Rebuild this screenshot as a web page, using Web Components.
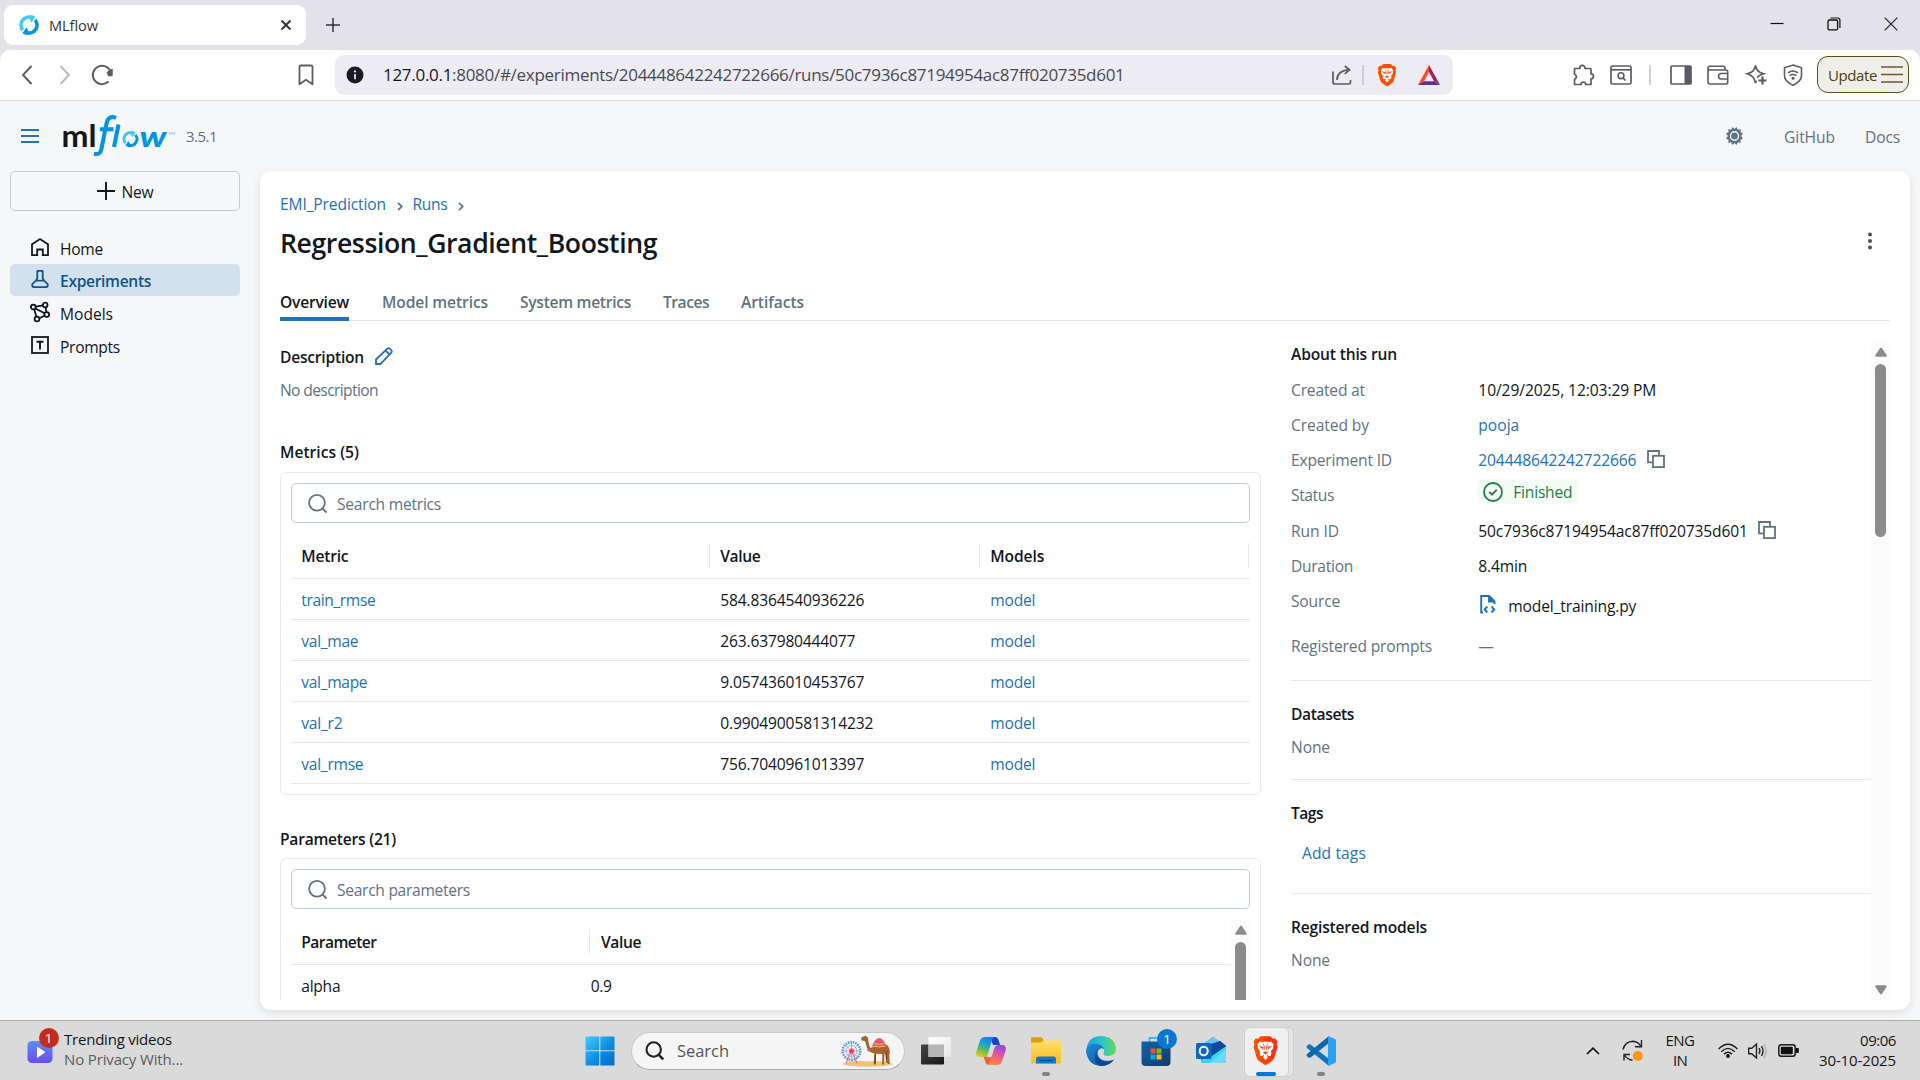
<!DOCTYPE html>
<html lang="en">
<head>
<meta charset="utf-8">
<title>MLflow</title>
<style>
html,body{margin:0;padding:0}
body{width:1920px;height:1080px;overflow:hidden;background:#f5f7f9;font:15.6px/20px "Open Sans","Noto Sans",sans-serif;color:#11171c}
</style>
</head>
<body>
<desktop-screen></desktop-screen>
<script>
const BASE = '<style>*{box-sizing:border-box}:host{box-sizing:border-box}fit-text,ui-icon{flex:none}</style>';
function define(name, html, setup) {
  const t = document.createElement('template');
  t.innerHTML = BASE + html;
  customElements.define(name, class extends HTMLElement {
    constructor() {
      super();
      this.attachShadow({mode: 'open'}).appendChild(t.content.cloneNode(true));
    }
    connectedCallback() { if (setup) setup(this, this.shadowRoot); }
  });
}

/* Icon set: [viewBox, markup]. Strokes use currentColor. */
const LION = '<path fill="#fff" d="M7.2 5.2l2.3.5 2.5-.4 2.5.4 2.3-.5 1.9 2.5-.5 1.4.4 1.2-2.2 3.1.5 1.6-.6 1.7-1.8.2-1.1-.9-.3.9 1.1 1-2.2 2.3-2.2-2.3 1.1-1-.3-.9-1.1.9-1.8-.2-.6-1.7.5-1.6-2.2-3.1.4-1.2-.5-1.4z"/><path d="M7 9l3.400 1-.7 1.300zM17 9l-3.400 1 .7 1.300zM10.200 14.200l1.800-.9 1.800.9-1.800 1.400zM10.300 6.800l.9 3-.3 2.400M13.700 6.800l-.9 3 .3 2.400" fill="#fb4a14" stroke="#fb4a14" stroke-width=".5"/>';
const BRAVE = '<defs><linearGradient id="b" x2="1"><stop stop-color="#ff5500"/><stop offset="1" stop-color="#ff2a10"/></linearGradient></defs><path fill="FILL" d="M7.8 1h8.4l1.9 2 2-.1 1.9 2.4-.8 2 .7 2.3-2.7 9.2-1.5 2L12 24.4l-5.700-3.6-1.5-2L2.100 9.600l.7-2.300-.8-2L3.900 2.900l2 .1z"/>' + LION;
const LOOP = '<path d="M3.900 15.200A8 8 0 0 1 12.500 2.400" stroke="#43c9ed" stroke-width="3.600" fill="none"/><path d="M11.500 0q3 .2 5 2l-4 5.500-2-3.500z" fill="#43c9ed"/><path d="M16.100 4.800A8 8 0 0 1 7.500 17.600" stroke="#0194e2" stroke-width="3.600" fill="none"/><path d="M8.500 20q-3-.2-5-2l4-5.500 2 3.500z" fill="#0194e2"/>';
const ICONS = {
  loop: ['0 0 20 20', LOOP],
  x: ['0 0 12 12', '<path d="M1.500 1.500l9 9m0-9l-9 9" stroke="currentColor" stroke-width="1.900"/>'],
  plus: ['0 0 18 18', '<path d="M9 0v18M0 9h18" stroke="currentColor" stroke-width="1.900"/>'],
  min: ['0 0 14 14', '<path d="M.5 6.500h13" stroke="#111" stroke-width="1.200"/>'],
  restore: ['0 0 14 14', '<rect x="1" y="3" width="9.600" height="9.800" rx="1.200" fill="none" stroke="#111" stroke-width="1.300"/><path d="M3.500 1h7.300q2.100 0 2.100 2.100v8" fill="none" stroke="#111" stroke-width="1.200"/>'],
  close: ['0 0 14 14', '<path d="M.7.700l12.600 12.600m0-12.600L.7 13.300" stroke="#222" stroke-width="1.200"/>'],
  back: ['0 0 12 20', '<path d="M10.500 1L2 10l8.500 9" fill="none" stroke="currentColor" stroke-width="1.900"/>'],
  fwd: ['0 0 12 20', '<path d="M1.500 1L10 10l-8.500 9" fill="none" stroke="currentColor" stroke-width="1.900"/>'],
  reload: ['0 0 22 22', '<path d="M17.500 17.500A9.200 9.200 0 1 1 19.300 7" fill="none" stroke="currentColor" stroke-width="1.900"/><path d="M16 8.500l5.200-3.500v6.500l-3.500.5z" fill="currentColor" stroke="currentColor" stroke-linejoin="round"/>'],
  bookmark: ['0 0 16 22', '<path d="M3 1.500h10q1.500 0 1.500 1.500v17.300L8 15.800l-6.500 4.500V3Q1.500 1.500 3 1.500z" fill="none" stroke="currentColor" stroke-width="1.800" stroke-linejoin="round"/>'],
  info: ['0 0 18 18', '<circle cx="9" cy="9" r="8.500" fill="#1b1a20"/><path d="M9 8v5.200" stroke="#edecf2" stroke-width="1.700"/><circle cx="9" cy="5.400" r="1.100" fill="#edecf2"/>'],
  share: ['0 0 20 20', '<path d="M1 6.500V17q0 2 2 2h14q1.500 0 1.500-1.500V15M5 15q0-9.500 12-10.200M12.800 1l4.800 3.800-4.800 4" fill="none" stroke="currentColor" stroke-width="1.700"/>'],
  brave: ['0 0 24 25', BRAVE.replace('FILL', '#ff4f00')],
  bravebig: ['0 0 24 25', BRAVE.replace('FILL', 'url(#b)')],
  bat: ['0 0 22 20', '<path d="M11 0L0 20l6-3.800L11 7z" fill="#ff4724"/><path d="M11 0v7l5 9.200 6 3.800z" fill="#9e1f63"/><path d="M0 20l6-3.800h10l6 3.800z" fill="#662d91"/>'],
  puzzle: ['0 0 22 22', '<path d="M1.500 4.500h5.300a2.600 2.600 0 1 1 5.100 0h5.100q1 0 1 1v4.300a2.500 2.500 0 1 1 0 5v5.700h-5.200a2.400 2.400 0 0 0-4.800 0H1.500v-5.200a2.600 2.600 0 0 0 0-5z" fill="none" stroke="currentColor" stroke-width="1.700" stroke-linejoin="round"/>'],
  searchtab: ['0 0 22 20', '<rect x="1" y="1" width="20" height="18" rx="1.500" fill="none" stroke="currentColor" stroke-width="1.700"/><path d="M1 4.800h20" stroke="currentColor" stroke-width="1.700"/><circle cx="11" cy="10.700" r="2.900" fill="none" stroke="currentColor" stroke-width="1.600"/><path d="M13 13l2.500 2.500" stroke="currentColor" stroke-width="1.700"/>'],
  panel: ['0 0 22 20', '<rect x="1" y="1" width="20" height="18" rx="1" fill="none" stroke="currentColor" stroke-width="1.700"/><path d="M14.500 1H21v18h-6.500z" fill="currentColor"/>'],
  wallet: ['0 0 22 20', '<path d="M1 3.200V17q0 2 2 2h16q1.700 0 1.700-1.700V6.700Q20.700 5 19 5H3Q1 5 1 3.200T3 1.300h13.500q1.500 0 1.500 1.500V5M20.700 8.500h-6.500q-2.700 0-2.700 2.700t2.700 2.800h6.500" fill="none" stroke="currentColor" stroke-width="1.600"/>'],
  sparkle: ['0 0 22 22', '<path d="M9.500 1.500c1.200 5 2.500 6.500 8.300 8.300-4.300 1.200-5.500 2.200-6.500 4M9.500 1.500C8.300 6.500 7 8 1.200 9.800 7 11.600 8.300 14 9.500 19c.2-1 .5-1.500.8-2.300" fill="none" stroke="currentColor" stroke-width="1.700"/><path d="M16.500 12.500v8M12.500 16.500h8" stroke="currentColor" stroke-width="2.200"/>'],
  vpn: ['0 0 20 22', '<path d="M10 1l8.500 2.800v7.700c0 4-3 7.200-8.500 9.700C4.500 18.700 1.500 15.500 1.500 11.500V3.800z" fill="none" stroke="currentColor" stroke-width="1.600"/><path d="M5 8.800q5-3.600 10 0M6.500 11.600q3.500-2.400 7 0" fill="none" stroke="currentColor" stroke-width="1.500"/><circle cx="10" cy="14.200" r="1.500" fill="currentColor"/>'],
  menu3: ['0 0 22 18', '<path d="M0 2h22M0 9.500h22M0 17h22" stroke="currentColor" stroke-width="1.700"/>'],
  burger: ['0 0 18 14', '<path d="M0 1h18M0 7h18M0 13h18" stroke="currentColor" stroke-width="1.900"/>'],
  gear: ['0 0 18 18', '<path d="M9 2l2-2 1.600 2.700 2.900-.6-.3 3L18 6.400 16 9l2 2.600-2.800 1.300.3 3-2.900-.6L11 18l-2-2-2 2-1.600-2.700-2.900.6.3-3L0 11.600 2 9 0 6.400l2.800-1.300-.3-3 2.900.6L7 0z" fill="currentColor"/><circle cx="9" cy="9" r="4.300" fill="none" stroke="#f5f7f9" stroke-width="1.500"/>'],
  home: ['0 0 18 18', '<path d="M1 6.300L9 1l8 5.300v10.800h-5.200v-5.600H6.200v5.600H1z" fill="none" stroke="currentColor" stroke-width="1.800"/>'],
  flask: ['0 0 18 18', '<path d="M5.800.9h6.400M6.300 1v6.800L5 10.600h8l-1.300-2.800V1M5 10.600l-3.700 3.600q-.6 2.700 1.700 2.900h12q2.300-.2 1.700-2.900L13 10.600" fill="none" stroke="currentColor" stroke-width="1.800"/>'],
  models: ['0 0 20 20', '<g fill="none" stroke="currentColor" stroke-width="1.800"><circle cx="3.300" cy="5" r="2.400"/><circle cx="15.200" cy="3" r="2.300"/><circle cx="16.700" cy="12.600" r="2.400"/><circle cx="7" cy="17" r="2.400"/><path d="M5.700 4.600l7.200-1.300M5.300 6.500l9.300 4.800M15.700 5.300l.6 4.900M4.200 7.400l2.200 7.200M9.300 16.200l5.300-2.500"/></g>'],
  prompts: ['0 0 18 18', '<rect x="1" y="1" width="16" height="16" fill="none" stroke="currentColor" stroke-width="1.800"/><path d="M5.500 5.700h7M9 5v8.500" stroke="currentColor" stroke-width="1.900"/>'],
  chev: ['0 0 6 9', '<path d="M1 .8l3.700 3.700L1 8.200" fill="none" stroke="currentColor" stroke-width="1.700"/>'],
  kebab: ['0 0 6 18', '<circle cx="3" cy="2.500" r="2" fill="currentColor"/><circle cx="3" cy="9" r="2" fill="currentColor"/><circle cx="3" cy="15.500" r="2" fill="currentColor"/>'],
  pencil: ['0 0 18 18', '<path d="M1 17v-4.500L12.300 1.700q1.300-1.200 2.600 0l1.400 1.400q1.200 1.300 0 2.600L5.500 17zM10.500 3.600l3.900 3.900" fill="none" stroke="currentColor" stroke-width="1.800"/>'],
  search: ['0 0 19 19', '<circle cx="9" cy="8.800" r="7.900" fill="none" stroke="currentColor" stroke-width="1.800"/><path d="M14 14l4.500 4.500" stroke="currentColor" stroke-width="1.800"/>'],
  copy: ['0 0 18 18', '<path d="M5 12.300H1V1h11v4.500" fill="none" stroke="currentColor" stroke-width="1.800"/><rect x="6" y="5.800" width="11" height="11.300" fill="none" stroke="currentColor" stroke-width="1.800"/>'],
  check: ['0 0 20 20', '<circle cx="10" cy="10" r="9" fill="none" stroke="currentColor" stroke-width="1.800"/><path d="M6.200 10l2.800 2.700 4.800-5" fill="none" stroke="currentColor" stroke-width="1.900"/>'],
  file: ['0 0 16 19', '<path d="M3 17.500H1.200V1h8l5.300 5.300V9M9 1v5.500h5.500" fill="none" stroke="currentColor" stroke-width="1.900"/><path d="M9 1l5.500 5.500H9z" fill="currentColor"/><path d="M7.300 11.500l-2.700 3 2.700 3M11.500 11.500l2.700 3-2.700 3" fill="none" stroke="currentColor" stroke-width="1.900"/>'],
  up: ['0 0 12 10', '<path d="M5 1.200q1-1.500 2 0l4.700 7q.4 1.500-1 1.500H1.300q-1.400 0-1-1.500z" fill="#8b8b8b"/>'],
  down: ['0 0 12 10', '<path d="M5 8.800q1 1.500 2 0l4.700-7q.4-1.500-1-1.500H1.300q-1.400 0-1 1.500z" fill="#8b8b8b"/>'],
  widgets: ['0 0 30 30', '<defs><linearGradient id="w" x2="0" y2="1"><stop stop-color="#5d8dfb"/><stop offset="1" stop-color="#6a4df0"/></linearGradient></defs><rect x="2.500" y="5" width="25" height="22" rx="4.500" fill="url(#w)"/><path d="M12 10.500v11.500l8.500-5.700z" fill="#fff"/>'],
  start: ['0 0 30 30', '<defs><linearGradient id="s" x2="1" y2="1"><stop stop-color="#45cbff"/><stop offset=".6" stop-color="#0a86e0"/><stop offset="1" stop-color="#0070cc"/></linearGradient></defs><path d="M1 .5h13.200v13.700H.5V1zM15.300.5H29l.5.5v13.200H15.300zM.5 15.300h13.700V29.500H1l-.5-.5zM15.300 15.300h14.200V29l-.5.5H15.300z" fill="url(#s)"/>'],
  lens: ['0 0 20 20', '<circle cx="8.700" cy="8.500" r="7.200" fill="none" stroke="#222" stroke-width="2.100"/><path d="M13.800 13.800l4.500 4.500" stroke="#222" stroke-width="2.600"/>'],
  camel: ['0 0 54 32', '<path d="M1 29q10-5 24-2.500Q40 25 53 29q-8 2.700-26 2.700T1 29z" fill="#edc27c"/><g stroke="#3c96e8" fill="none"><circle cx="10.500" cy="16" r="8.800" stroke-width="2.400" stroke-dasharray="1.500 1"/><circle cx="10.500" cy="16" r="5.500" stroke="#8bbcf0" stroke-width="1"/><path d="M10.500 7v18M1.500 16h18M4 9.500l13 13M17 9.500l-13 13" stroke="#ec7f9d" stroke-width=".8"/></g><path d="M9.500 18L5 28M11.500 18l4.500 10" stroke="#ef6c82" stroke-width="1.100"/><circle cx="10.500" cy="16" r="2.500" fill="#e94267"/><path d="M20 3.300q1.500-2 3.500-2l1-.8.7.9 1.600.8q.6 5.800 2.200 10.300 1.600.8 3.200-1.300Q34.500 4.500 38.500 4q4.200.5 6 5.200 3.900 1.800 4.200 6.800.3 2-.4 4.500l.5 8.500h-2l-1-8.500-2.200-2.500-.5 10.500 .3 1h-2.300l.2-10.500-6.300-.2-.3 9.700.2 1h-2.200l.7-11q-5.600-1-7.300-5.500L24 6l-3.500-.4z" fill="#a9622b"/><path d="M46 28l-1-10.500M34 28.500l.3-9" stroke="#6b3a1c" stroke-width="1.300"/><path d="M31 11q3-8 7.500-8 3.800 0 6 7.500-7 3-13.500.5z" fill="#e05a78"/><path d="M32.500 8.700q6 1.300 11 0M31.500 11.200q7 1.500 13 0" stroke="#f4c04e" stroke-width="1" fill="none"/><path d="M25.200 14.500l4-.6-1.500 3z" fill="#c568c0"/>'],
  taskview: ['0 0 30 28', '<defs><linearGradient id="t" x2="1" y2="1"><stop stop-color="#444"/><stop offset="1" stop-color="#161616"/></linearGradient><linearGradient id="tw" x2="1" y2="1"><stop stop-color="#fff"/><stop offset="1" stop-color="#e6e6e6"/></linearGradient></defs><rect y="7.500" width="23" height="20" rx="1" fill="url(#t)"/><rect x="7.500" y="0" width="22.500" height="20" rx="1" fill="url(#tw)"/><path d="M7.500 7.500H23V20H7.500z" fill="#b5b5b5"/>'],
  copilot: ['0 0 30 28', '<defs><linearGradient id="c1" x1=".6" x2=".2" y2="1"><stop stop-color="#1b7be8"/><stop offset=".35" stop-color="#18a5d8"/><stop offset=".65" stop-color="#5fc150"/><stop offset="1" stop-color="#f6c812"/></linearGradient><linearGradient id="c2" x1=".7" x2=".3" y2="1"><stop stop-color="#8c48ec"/><stop offset=".45" stop-color="#e4569a"/><stop offset="1" stop-color="#ff8b3c"/></linearGradient></defs><path d="M14 0h5q2.500 0 3.500 3l1.600 5H17z" fill="#1546c4"/><path d="M7.500 19.500l2 6q.8 2.500 3 2.500l5-9z" fill="#f0623a"/><path d="M9 0h10q-2.300.5-3 3l-4 13.500Q11 20 7.500 20H3Q-.8 19 .3 14.500L4 3.500Q5.300 0 9 0z" fill="url(#c1)"/><path d="M21 28H11q2.300-.5 3-3l4-13.500Q19 8 22.500 8H27q3.800 1 2.700 5.500L26 24.500Q24.700 28 21 28z" fill="url(#c2)"/><path d="M14.700 10.500Q15.500 8 18 8h4.500Q19 8 18 11.500l-2.500 8Q14.800 21 12 20h-1.500q1.500-.8 2-2.500z" fill="#dadada"/>'],
  explorer: ['0 0 30 27', '<defs><linearGradient id="e" x2="0" y2="1"><stop stop-color="#ffdf6b"/><stop offset="1" stop-color="#fbbc1c"/></linearGradient></defs><path d="M0 1.500Q0 .3 1.200.3h8.500q1 0 1.600.7L13 3.500V9H0z" fill="#dd9d0c"/><path d="M0 5.500h9.500l3.500-2h15.500q1.500 0 1.500 1.500v20q0 1.500-1.500 1.500h-27Q0 26.500 0 25z" fill="url(#e)"/><path d="M5 26.500V22q0-2.500 2.500-2.500h15Q25 19.500 25 22v4.500z" fill="#1479c9"/><path d="M8.500 23.500h13" stroke="#0a4b87" stroke-width="1.300"/>'],
  edge: ['0 0 30 30', '<defs><linearGradient id="g1" x2="1"><stop stop-color="#1f9fde"/><stop offset=".55" stop-color="#2ec6c8"/><stop offset="1" stop-color="#68d94f"/></linearGradient><linearGradient id="g2" x2="1" y2="1"><stop stop-color="#1a8fd8"/><stop offset="1" stop-color="#0b4aa0"/></linearGradient></defs><path d="M.5 13Q2 .3 15 0q13.500.3 15 12.500 0 7-7.500 7.500-5.500 0-5-2.500 1.800-2 .2-4.500Q13 7.500.5 13z" fill="url(#g1)"/><path d="M0 15Q1 8 9 7.800q7 .2 9.500 5.500-2-1.800-4-.8-4.500 2.800-2 8 4 6 13.500 3.700l2-.7Q23.500 30 15 30 1.500 29 0 15z" fill="url(#g2)"/><path d="M10.500 15q-.8 7 5 10 6.500 3 12.500-1.500Q23.500 30 15 30q-9-3-4.500-15z" fill="#0c4592"/>'],
  store: ['0 0 30 30', '<defs><linearGradient id="st" x2="1" y2="1"><stop stop-color="#0f62ae"/><stop offset="1" stop-color="#153a66"/></linearGradient></defs><path d="M8.500 7V2h13v5" fill="none" stroke="#36b9ee" stroke-width="1.800"/><path d="M.5 5.500h29V26q0 4-4 4h-21q-4 0-4-4z" fill="url(#st)"/><path d="M9.500 12.500h5v5h-5z" fill="#f15022"/><path d="M15.500 12.500h5v5h-5z" fill="#80bb03"/><path d="M9.500 18.500h5v5h-5z" fill="#05a5f0"/><path d="M15.500 18.500h5v5h-5z" fill="#ffba06"/>'],
  outlook: ['0 0 30 27', '<path d="M5 8.500L17 0l13 9v14q0 3-3 3H8q-3 0-3-3z" fill="#2b8bd8"/><path d="M17 0l13 9-16 11-9-6V8.500z" fill="#6cc4ef"/><path d="M9 9l15-5 6 5-15 11z" fill="#104a9e"/><path d="M30 9.500V23q0 3-3 3H9q-3 0-4-2.500z" fill="#3fd2f5"/><path d="M10 12L24 4l6 5-14 10z" fill="#104a9e"/><path d="M14 26l16-14v11q0 3-3 3z" fill="#67dcfb"/><rect y="6" width="15.500" height="16" rx="1.500" fill="#1066bd"/><ellipse cx="7.700" cy="14" rx="4" ry="4.300" fill="none" stroke="#fff" stroke-width="2"/>'],
  vscode: ['0 0 30 30', '<path d="M1 12q-1-1.300 0-2.300l1.500-1.300q1-.6 2 .2L23 23v7z" fill="#0f73bd"/><path d="M1 18q-1 1.300 0 2.300l1.500 1.300q1 .6 2-.2L23 7V0z" fill="#0a68b0"/><path d="M22 0l7 3q1 .5 1 1.500v21q0 1-1 1.500l-7 3z" fill="#28a2f3"/>'],
  tray: ['0 0 14 8', '<path d="M1 7l6-5.800L13 7" fill="none" stroke="#111" stroke-width="1.700"/>'],
  sync: ['0 0 22 22', '<path d="M1 9.500Q3 1.500 11 1.200q5 .2 8 5.300M19.500 0v6.700h-6.500M2 20.500v-6h6M2.500 15q2.500 4.500 8 5.300" fill="none" stroke="#222" stroke-width="1.400"/><circle cx="15.800" cy="16" r="5" fill="#fb970c"/>'],
  wifi: ['0 0 20 15', '<g fill="none" stroke="#1a1a1a" stroke-width="1.400"><path d="M.6 6q9.400-9.600 18.800 0M3.300 8.800q6.700-6.800 13.400 0M6 11.300q4-4.100 8 0"/></g><circle cx="10" cy="13" r="1.900" fill="#111"/>'],
  speaker: ['0 0 20 16', '<path d="M.7 5.300h3L8.500 1v14L3.700 10.700h-3z" fill="none" stroke="#222" stroke-width="1.400"/><path d="M11 5.200q1.800 2.800 0 5.600M13.500 3.200q3 4.800 0 9.600" fill="none" stroke="#222" stroke-width="1.400"/><path d="M16 1q4.200 7 0 14" fill="none" stroke="#aaa" stroke-width="1.300"/>'],
  battery: ['0 0 21 13', '<rect x=".8" y=".8" width="16.400" height="11.400" rx="2.500" fill="none" stroke="#1a1a1a" stroke-width="1.500"/><rect x="2.800" y="2.800" width="12" height="7.400" rx="1" fill="#111"/><path d="M18 4h2q.8 0 .8.800v3.400q0 .8-.8.800h-2z" fill="#111"/>'],
};
customElements.define('ui-icon', class extends HTMLElement {
  constructor() {
    super();
    const [vb, body] = ICONS[this.getAttribute('name')];
    const [, , vw, vh] = vb.split(' ');
    const w = this.getAttribute('w') || vw, h = this.getAttribute('h') || vh;
    this.attachShadow({mode: 'open'}).innerHTML =
      `<style>:host{display:block;width:${w}px;height:${h}px}svg{display:block;overflow:visible}</style>` +
      `<svg width="${w}" height="${h}" viewBox="${vb}" preserveAspectRatio="none">${body}</svg>`;
  }
});

/* ---------- browser chrome ---------- */
define('browser-tabs', `<style>
:host{display:flex;height:50px;background:#e3e2e8;padding:5px 22px 0 4px;color:#333}
.tab{width:302px;height:40px;border-radius:9px;background:#fff;display:flex;align-items:center;padding:0 14px 0 15px;font-size:14.6px}
fit-text{margin:-1px 0 0 10px}.tab .x{margin-left:auto}
.add{margin:13px 0 0 20px}.win{display:flex;gap:43px;margin-left:auto;padding-top:12px}
</style><div class="tab"><ui-icon name="loop" w="20" h="20"></ui-icon><fit-text w="49">MLflow</fit-text><ui-icon class="x" name="x" w="12" h="12"></ui-icon></div>
<ui-icon class="add" name="plus" w="14" h="14"></ui-icon>
<div class="win"><ui-icon name="min"></ui-icon><ui-icon name="restore"></ui-icon><ui-icon name="close"></ui-icon></div>`);

define('browser-toolbar', `<style>
:host{display:block;height:51px;background:#e3e2e8;color:#5c5b64}
.bar{height:51px;background:#fff;border-bottom:1px solid #dfdfe6;border-radius:10px 10px 0 0;display:flex;align-items:center;padding:0 11px 0 21px}
.url{width:1118px;height:40px;border-radius:9px;background:#edecf2;margin-left:21px;display:flex;align-items:center;padding:0 13px 0 11px;font-size:17px}
.url b{font-weight:400;color:#17161c}.url fit-text{margin-left:19px;color:#4a4952}
.share{margin-left:auto}.sep{width:2px;height:20px;background:#cfced6;margin:0 12px 0 10px}
.upd{width:92px;height:37px;border:1.500px solid #5b4c14;border-radius:11px;background:#f0eee9;display:flex;align-items:center;padding-left:10px;font-size:15px;color:#4b3f0e;margin:-1px 0 0 13px}
.upd ui-icon{margin:-1px 0 0 4px;color:#6a5a28}
</style><div class="bar"><ui-icon name="back" w="12" h="20"></ui-icon><ui-icon name="fwd" w="12" h="20" style="margin-left:26px;color:#bbb"></ui-icon><ui-icon name="reload" style="margin-left:20px"></ui-icon>
<ui-icon name="bookmark" style="margin-left:185px"></ui-icon>
<div class="url"><ui-icon name="info"></ui-icon><fit-text w="741.5"><b>127.0.0.1</b>:8080/#/experiments/204448642242722666/runs/50c7936c87194954ac87ff020735d601</fit-text>
<ui-icon class="share" name="share"></ui-icon><div class="sep"></div><ui-icon name="brave" w="22" h="24"></ui-icon><ui-icon name="bat" style="margin-left:20px"></ui-icon></div>
<ui-icon name="puzzle" style="margin-left:120px"></ui-icon><ui-icon name="searchtab" style="margin-left:15px"></ui-icon><div class="sep" style="margin:0 19px 0 17px"></div>
<ui-icon name="panel"></ui-icon><ui-icon name="wallet" style="margin-left:15px"></ui-icon><ui-icon name="sparkle" style="margin-left:17px"></ui-icon><ui-icon name="vpn" style="margin-left:15px"></ui-icon>
<div class="upd" style="margin-left:14px"><fit-text w="49">Update</fit-text><ui-icon name="menu3"></ui-icon></div></div>`);

/* ---------- MLflow app ---------- */
define('mlflow-logo', `<style>
:host{display:flex;width:112px;height:42px}
svg{overflow:visible}text{font-family:Lato,"Open Sans",sans-serif}
</style><svg width="112" height="42" viewBox="0 0 112 42">
<text x="-1.500" y="32" font-size="30" font-weight="700" fill="#11171c" textLength="35" lengthAdjust="spacingAndGlyphs">ml</text>
<path d="M53 2.800c-5.500-2.200-8.400.6-9.600 6.200l-5 25c-.9 4.300-2.700 5.800-7.400 4.700M37 14.200h13.500" fill="none" stroke="#0194e2" stroke-width="4"/>
<path d="M55.500 9.500L51 32" stroke="#0194e2" stroke-width="4"/>
<g transform="translate(59.500 16) scale(.8)">${LOOP}</g>
<text x="76.500" y="31.500" font-size="29" font-style="italic" font-weight="900" fill="#0194e2" textLength="27" lengthAdjust="spacingAndGlyphs">w</text>
<text x="105" y="20" font-size="4.500" fill="#5bb6e8">TM</text></svg>`);

define('app-header', `<style>
:host{display:flex;height:70px;align-items:center;padding:0 20px 0 21px;color:#5f7281}
mlflow-logo{margin:0 0 0 24px}.v{margin-left:11px}.gear{margin-left:auto}
</style><ui-icon name="burger" style="color:#2272b4"></ui-icon><mlflow-logo></mlflow-logo><fit-text class="v" w="31" style="font-size:15px">3.5.1</fit-text>
<ui-icon class="gear" name="gear" w="17" h="18"></ui-icon><fit-text w="51" style="margin:2px 0 0 41px">GitHub</fit-text><fit-text w="35" style="margin:2px 0 0 30px">Docs</fit-text>`);

define('nav-item', `<style>
:host{display:flex;height:32px;margin-bottom:.7px;align-items:center;padding-left:20px;border-radius:5px;gap:10px}
:host([active]){background:#d3e1ee;color:#0e538b;font-weight:600}
.i{width:20px;display:flex;justify-content:center;margin-top:-1.500px}::slotted(fit-text){margin-top:2px}
</style><div class="i"></div><slot></slot>`, (el, r) => {
  const n = el.getAttribute('icon');
  r.querySelector('.i').innerHTML = `<ui-icon name="${n}"></ui-icon>`;
});

define('side-nav', `<style>
:host{display:block;width:260px;padding:0 20px 0 10px}
.new{height:40px;border:1px solid #c0cdd8;border-radius:5px;display:flex;justify-content:center;align-items:center;gap:7px;margin-bottom:20.500px}
.new fit-text{margin-top:2px}
</style><div class="new"><ui-icon name="plus"></ui-icon><fit-text w="32">New</fit-text></div>
<nav><nav-item icon="home"><fit-text w="43">Home</fit-text></nav-item><nav-item icon="flask" active><fit-text w="91">Experiments</fit-text></nav-item>
<nav-item icon="models"><fit-text w="53">Models</fit-text></nav-item><nav-item icon="prompts"><fit-text w="60">Prompts</fit-text></nav-item></nav>`);

define('scroll-bar', `<style>
:host{display:flex;flex-direction:column;align-items:center;width:19px;background:#fcfcfc;flex:none;padding:6px 0 5px}
i{width:11px;height:var(--thumb);border-radius:6px;background:#8b8b8b;margin-top:7px;flex:none}
.d{margin-top:auto}:host([open-end]) .d{display:none}:host([open-end]) i{border-radius:6px 6px 0 0}
</style><ui-icon name="up"></ui-icon><i></i><ui-icon class="d" name="down"></ui-icon>`);

define('search-box', `<style>
:host{display:flex;height:40px;border:1px solid #c0cdd8;border-radius:5px;align-items:center;padding:0 16px;gap:10px;color:#5f7281}
::slotted(fit-text){margin-top:1px}
</style><ui-icon name="search"></ui-icon><slot></slot>`);

define('data-panel', `<style>
:host{display:block;border:1px solid #e6eaee;border-radius:6px;padding:10px}
.body{display:flex;margin-top:10px}.t{flex:1;min-width:0}
</style><slot name="search"></slot><div class="body"><div class="t"><slot></slot></div><slot name="bar"></slot></div>`);

define('table-row', `<style>
:host{display:grid;grid-template-columns:var(--cols);height:41px;align-items:center;border-bottom:1px solid #e6eaee;padding-top:2px}
:host([head]){height:46px;font-weight:600;padding-top:0}
::slotted(span){padding-left:10.300px;display:flex;align-items:center;height:25px}
:host([head]) ::slotted(span){border-right:1px solid #e6eaee}
::slotted(span.flush){padding-left:.7px}::slotted(span.last){border-right:0!important}
::slotted(span.link){color:#2272b4}
</style><slot></slot>`);

define('metrics-table', `<style>:host{display:block;--cols:419px 270px 269px}</style>
<data-panel><search-box slot="search"><fit-text w="104">Search metrics</fit-text></search-box><div id="rows">
<table-row head><span><fit-text w="47">Metric</fit-text></span><span><fit-text w="40">Value</fit-text></span><span><fit-text w="54">Models</fit-text></span></table-row></div></data-panel>`,
(el, r) => {
  const box = r.getElementById('rows');
  for (const [n, w, v, vw] of [['train_rmse', 74, '584.8364540936226', 144], ['val_mae', 57, '263.637980444077', 135], ['val_mape', 66, '9.057436010453767', 144], ['val_r2', 41, '0.9904900581314232', 153], ['val_rmse', 62, '756.7040961013397', 144]])
    box.insertAdjacentHTML('beforeend', `<table-row><span class="link"><fit-text w="${w}">${n}</fit-text></span><span><fit-text w="${vw}">${v}</fit-text></span><span class="link"><fit-text w="45">model</fit-text></span></table-row>`);
});

define('params-table', `<style>:host{display:block;--cols:299px 1fr}scroll-bar{height:400px;--thumb:380px}</style>
<data-panel><search-box slot="search"><fit-text w="133">Search parameters</fit-text></search-box>
<table-row head><span><fit-text w="75">Parameter</fit-text></span><span class="last" style="padding-left:11px"><fit-text w="40">Value</fit-text></span></table-row>
<table-row><span><fit-text w="39">alpha</fit-text></span><span class="flush"><fit-text w="21">0.9</fit-text></span></table-row>
<scroll-bar slot="bar" open-end></scroll-bar></data-panel>`);

define('about-row', `<style>
:host{display:flex;height:35.250px;align-items:flex-start}
.l{width:187.300px;height:35.250px;display:flex;align-items:center;color:#5f7281}.v{height:35.250px;display:flex;align-items:center}
</style><div class="l"><slot name="label"></slot></div><div class="v"><slot></slot></div>`);

define('status-tag', `<style>
:host{display:flex;align-items:center;height:25px;width:100px;padding-left:5px;gap:10px;border-radius:5px;background:#f3fcf6;color:#277c43;margin-top:-7px}
</style><ui-icon name="check"></ui-icon><slot></slot>`);

define('side-section', `<style>
:host{display:block;border-top:1px solid #e6eaee;padding-top:16.500px;height:var(--h)}
.h{height:34px;display:flex;align-items:center;font-weight:600}.b{display:flex;align-items:center;height:32px;color:#5f7281}
</style><div class="h"><slot name="title"></slot></div><div class="b"><slot></slot></div>`);

define('about-panel', `<style>
:host{display:flex;width:599px;height:659px;overflow:hidden;margin-top:20px}
.c{flex:1;min-width:0}.h{height:32px;display:flex;align-items:center;font-weight:600;margin-top:-3px;margin-bottom:2px}
.link{color:#2272b4}ui-icon.c2{color:#5f7281;margin:-3px 0 0 10.500px}scroll-bar{--thumb:173px}
</style><div class="c"><div class="h"><fit-text w="106">About this run</fit-text></div>
<about-row><fit-text slot="label" w="74">Created at</fit-text><fit-text w="178">10/29/2025, 12:03:29 PM</fit-text></about-row>
<about-row><fit-text slot="label" w="78">Created by</fit-text><fit-text class="link" w="41">pooja</fit-text></about-row>
<about-row><fit-text slot="label" w="101">Experiment ID</fit-text><fit-text class="link" w="158">204448642242722666</fit-text><ui-icon class="c2" name="copy"></ui-icon></about-row>
<about-row><fit-text slot="label" w="43">Status</fit-text><status-tag><fit-text w="59">Finished</fit-text></status-tag></about-row>
<about-row><fit-text slot="label" w="48">Run ID</fit-text><fit-text w="269.5">50c7936c87194954ac87ff020735d601</fit-text><ui-icon class="c2" name="copy" style="margin-top:-2px"></ui-icon></about-row>
<about-row><fit-text slot="label" w="62">Duration</fit-text><fit-text w="49">8.4min</fit-text></about-row>
<about-row style="height:45px"><fit-text slot="label" w="49">Source</fit-text><ui-icon name="file" style="color:#2272b4;margin:7px 12px 0 2px"></ui-icon><fit-text w="128" style="margin-top:10px">model_training.py</fit-text></about-row>
<about-row style="height:51px"><fit-text slot="label" w="141">Registered prompts</fit-text><fit-text w="15" style="color:#5f7281">—</fit-text></about-row>
<side-section style="--h:99px"><fit-text slot="title" w="63">Datasets</fit-text><fit-text w="39">None</fit-text></side-section>
<side-section style="--h:114px"><fit-text slot="title" w="32">Tags</fit-text><fit-text w="64" style="margin:14px 0 0 11px;color:#2272b4">Add tags</fit-text></side-section>
<side-section style="--h:110px"><fit-text slot="title" w="136">Registered models</fit-text><fit-text w="39">None</fit-text></side-section>
</div><scroll-bar></scroll-bar>`);

define('run-page', `<style>
:host{display:flex;flex-direction:column;width:1650px;height:839px;border-radius:11px;background:#fff;padding:20px 20px 10px;box-shadow:0 3px 10px rgba(0,0,0,.1)}
.bc{height:28px;display:flex;align-items:center;color:#2272b4;padding-bottom:2px}.bc ui-icon{color:#5f7281;margin:4px 10px 0 10.500px}
.title{height:48px;display:flex;align-items:center;justify-content:space-between;font-size:26.600px;line-height:36px;font-weight:600;padding-right:17px}
.title ui-icon{color:#44535f;margin-top:-4px}
.tabs{margin-top:16px;height:38px;border-bottom:1px solid #e0e6ea;display:flex;gap:32px;font-weight:600;color:#5f7281}
.tabs div{height:38px;display:flex;align-items:center}.tabs .on{color:#11171c;border-bottom:4px solid #2272b4;padding-top:4px;margin-right:1px}
.cols{display:flex;gap:30px;flex:1;min-height:0}.left{width:981px;overflow:hidden;padding-top:20px}
.h{height:32px;display:flex;align-items:center;font-weight:600}.h ui-icon{color:#2272b4;margin:-2px 0 0 11px}
.nd{height:34px;display:flex;align-items:center;color:#5f7281;padding-bottom:1px}
</style>
<div class="bc"><fit-text w="106">EMI_Prediction</fit-text><ui-icon name="chev"></ui-icon><fit-text w="35">Runs</fit-text><ui-icon name="chev"></ui-icon></div>
<div class="title"><fit-text w="377">Regression_Gradient_Boosting</fit-text><ui-icon name="kebab"></ui-icon></div>
<div class="tabs"><div class="on"><fit-text w="69">Overview</fit-text></div><div><fit-text w="106">Model metrics</fit-text></div><div><fit-text w="111">System metrics</fit-text></div><div><fit-text w="46">Traces</fit-text></div><div><fit-text w="63">Artifacts</fit-text></div></div>
<div class="cols"><div class="left"><div class="h"><fit-text w="84">Description</fit-text><ui-icon name="pencil"></ui-icon></div><div class="nd"><fit-text w="98">No description</fit-text></div>
<div class="h" style="margin-top:29px"><fit-text w="79">Metrics (5)</fit-text></div><metrics-table style="margin-top:4px"></metrics-table>
<div class="h" style="margin-top:28px"><fit-text w="116">Parameters (21)</fit-text></div><params-table style="margin-top:3px"></params-table></div>
<about-panel></about-panel></div>`);

/* ---------- Windows taskbar ---------- */
define('task-icon', `<style>
:host{display:flex;width:55px;height:50px;justify-content:center;align-items:center;position:relative}
u{position:absolute;left:50%;bottom:0;width:8px;height:4px;margin-left:-4px;border-radius:2px;background:#838383;display:none;z-index:2}
:host([running]) u{display:block}:host([focused]) u{display:block;width:20px;margin-left:-10px;background:#0078d4}
:host([focused])::before{content:"";position:absolute;left:7px;top:1px;width:47px;height:48px;border-radius:6px;background:#e4e4e4;border:1px solid #cfcfcf}
:host([focused])::after{content:"";position:absolute;left:6px;top:1px;width:43px;height:48px;border-radius:6px;background:#f0f0f0;border:1px solid #d2d2d2;z-index:0}
::slotted(ui-icon){position:relative;z-index:1}
</style><slot></slot><slot name="badge"></slot><u></u>`);

define('count-badge', `<style>
:host{position:absolute;width:20px;height:20px;border-radius:50%;color:#fff;font-size:13.500px;line-height:20px;text-align:center;background:var(--c);z-index:2}
</style><slot></slot>`);

define('task-bar', `<style>
:host{display:flex;height:60px;background:#dadada;border-top:1px solid #adadad;align-items:center;color:#161616;font-size:15px;padding-right:24px}
.w{display:flex;align-items:center;width:584.500px;padding-left:25px;position:relative}.w .tx{margin:-3px 0 0 9px;line-height:20px}
fit-text{display:block}.pill{width:274px;height:38px;margin-left:16.500px;border-radius:19px;background:#f5f5f5;border:1px solid #c8c8c8;border-bottom-color:#a9a9a9;display:flex;align-items:center;padding:0 9px 0 13px;font-size:16.500px;color:#555}
.pill fit-text{margin-left:12px}.pill .c{margin-left:auto}
.tray{display:flex;align-items:center;margin-left:auto}.two{display:flex;flex-direction:column;line-height:20px;margin-top:-1px}
</style><div class="w"><ui-icon name="widgets"></ui-icon><count-badge style="--c:#c42b1c;left:38.500px;top:-4px">1</count-badge><div class="tx"><fit-text w="108">Trending videos</fit-text><fit-text w="119" style="color:#5c5c5c">No Privacy With...</fit-text></div></div>
<ui-icon name="start"></ui-icon>
<div class="pill"><ui-icon name="lens"></ui-icon><fit-text w="52">Search</fit-text><ui-icon class="c" name="camel"></ui-icon></div>
<task-icon style="margin-left:3px"><ui-icon name="taskview"></ui-icon></task-icon>
<task-icon><ui-icon name="copilot"></ui-icon></task-icon>
<task-icon running><ui-icon name="explorer"></ui-icon></task-icon>
<task-icon><ui-icon name="edge"></ui-icon></task-icon>
<task-icon><ui-icon name="store"></ui-icon><count-badge slot="badge" style="--c:#0a78d1;right:6px;top:3px">1</count-badge></task-icon>
<task-icon><ui-icon name="outlook"></ui-icon></task-icon>
<task-icon focused><ui-icon name="bravebig" w="29" h="31"></ui-icon></task-icon>
<task-icon running><ui-icon name="vscode"></ui-icon></task-icon>
<div class="tray"><ui-icon name="tray"></ui-icon><ui-icon name="sync" style="margin-left:22px"></ui-icon><div class="two" style="margin-left:22px;align-items:center"><fit-text w="29">ENG</fit-text><fit-text w="14">IN</fit-text></div>
<ui-icon name="wifi" style="margin-left:23px"></ui-icon><ui-icon name="speaker" style="margin-left:10px"></ui-icon><ui-icon name="battery" style="margin-left:10px"></ui-icon>
<div class="two" style="margin-left:20.500px;align-items:flex-end"><fit-text w="36">09:06</fit-text><fit-text w="77">30-10-2025</fit-text></div></div>`);

define('desktop-screen', `<style>
:host{display:flex;flex-direction:column;width:1920px;height:1080px;background:#f5f7f9}
.main{display:flex;height:849px;flex:none}
</style><browser-tabs></browser-tabs><browser-toolbar></browser-toolbar><app-header></app-header>
<div class="main"><side-nav></side-nav><run-page></run-page></div><task-bar></task-bar>`);

/* Single-line label set to a fixed advance width by tracking. Defined last so its parents are laid out. */
customElements.define('fit-text', class extends HTMLElement {
  constructor() {
    super();
    this.attachShadow({mode: 'open'}).innerHTML = '<style>:host{display:inline-block;white-space:nowrap}</style><slot></slot>';
  }
  connectedCallback() {
    const range = document.createRange();
    range.selectNodeContents(this);
    const natural = range.getBoundingClientRect().width, w = +this.getAttribute('w');
    if (!natural) return;
    this.style.letterSpacing = ((w - natural) / this.textContent.length).toFixed(3) + 'px';
    this.style.width = w + 'px';
  }
});
</script>
</body>
</html>
